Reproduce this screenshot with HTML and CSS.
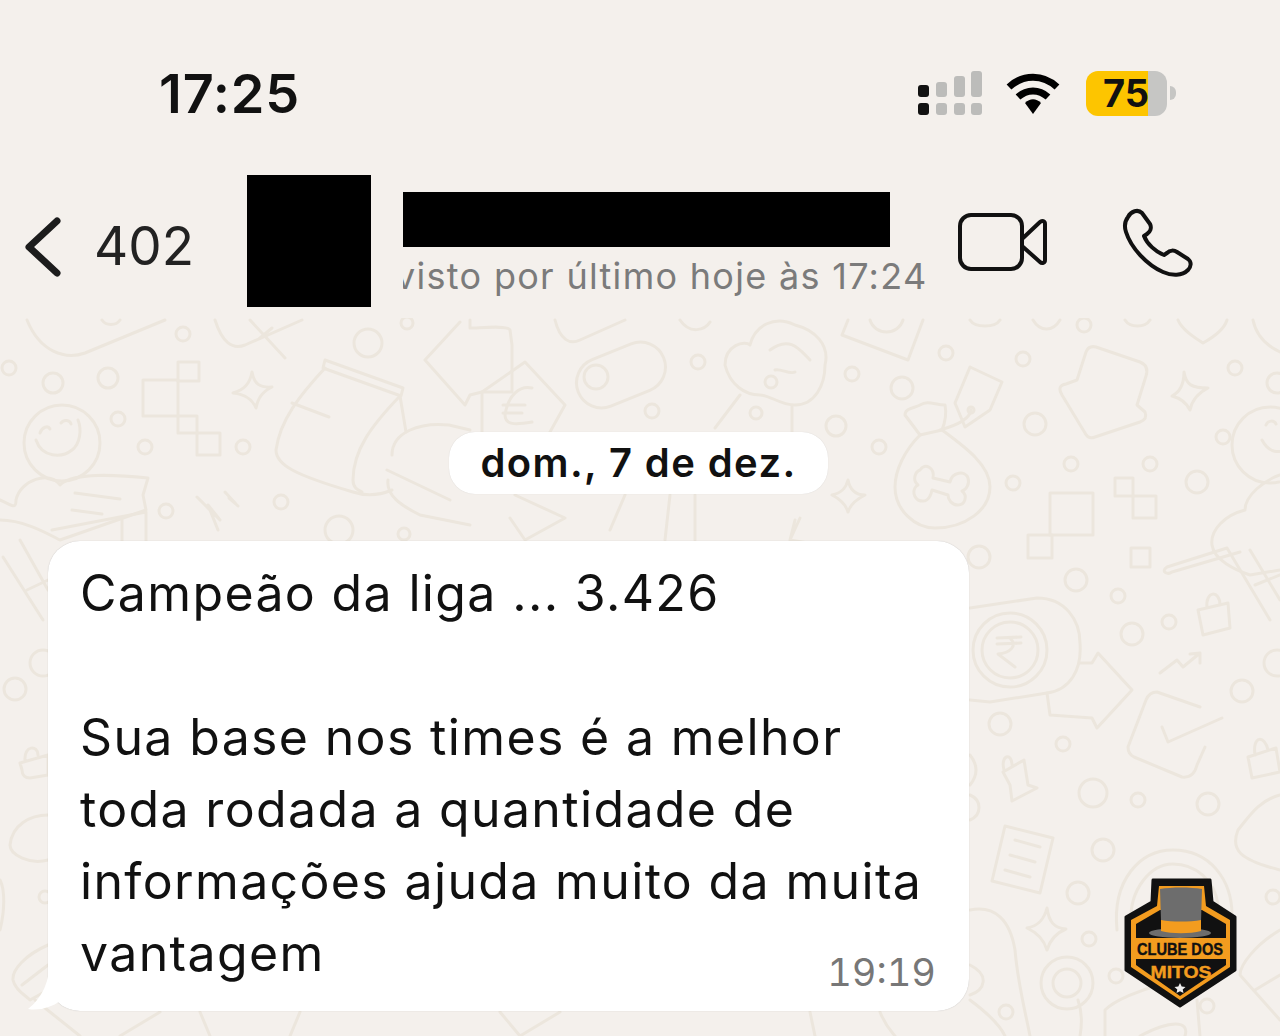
FILE: index.html
```html
<!DOCTYPE html>
<html lang="pt-BR">

<head>
    <meta charset="UTF-8">
    <title>Conversa</title>
    <link rel="stylesheet" href="styles.css">
</head>

<body>
    <div class="screen">
        <div class="status-bar">
            <div class="clock">17:25</div>
            <div class="status-icons">
                <svg class="signal" viewBox="918 71 64 45">
                    <rect x="918" y="85" width="11" height="12" rx="3" fill="#111" />
                    <rect x="918" y="103" width="11" height="12" rx="3" fill="#111" />
                    <g fill="#bcbcba">
                        <rect x="936" y="82" width="11" height="15" rx="3" />
                        <rect x="954" y="76" width="11" height="21" rx="3" />
                        <rect x="971" y="71" width="11" height="26" rx="3" />
                        <rect x="936" y="103" width="11" height="12" rx="3" />
                        <rect x="954" y="103" width="11" height="12" rx="3" />
                        <rect x="971" y="103" width="11" height="12" rx="3" />
                    </g>
                </svg>
                <svg class="wifi" viewBox="1005 70 56 46" fill="none" stroke="#000" stroke-width="7">
                    <path d="M1009 87 C1023 74 1043 74 1057 87" />
                    <path d="M1018 97 C1027 89 1039 89 1048 97" />
                    <path d="M1025 103 C1030 98 1036 98 1041 103 L1033 114 Z" fill="#000" stroke="none" />
                </svg>
                <div class="battery">
                    <div class="battery-body">75</div>
                    <div class="battery-nub"></div>
                </div>
            </div>
        </div>

        <div class="chat-header">
            <svg class="back-icon" viewBox="0 0 38 62" fill="none" stroke="#1c1c1c" stroke-width="7" stroke-linecap="round" stroke-linejoin="round">
                <path d="M33 5 L5 31 L33 57" />
            </svg>
            <div class="back-count">402</div>
            <div class="avatar"></div>
            <div class="contact">
                <div class="contact-name"></div>
                <div class="contact-seen">visto por último hoje às 17:24</div>
            </div>
            <svg class="video-icon" viewBox="958 212 90 60" fill="none" stroke="#111" stroke-width="4" stroke-linejoin="round">
                <rect x="960" y="215" width="62" height="54" rx="11" />
                <path d="M1022 239 L1040 222 C1042 220 1045 221 1045 224 L1045 260 C1045 263 1042 264 1040 262 L1022 246" />
            </svg>
            <svg class="phone-icon" viewBox="1122 207 72 72" fill="none" stroke="#111" stroke-width="4" stroke-linejoin="round">
                <path d="M1128 217 C1131 211 1138 209 1142 213 L1150 224 C1152 228 1150 232 1147 234 L1144 236 C1147 244 1156 252 1164 255 L1167 253 C1170 250 1174 250 1177 252 L1188 259 C1192 262 1191 267 1188 270 C1182 276 1172 276 1163 272 C1147 265 1131 248 1126 232 C1124 226 1125 221 1128 217 Z" />
            </svg>
        </div>

        <div class="chat">
            <!-- desenho de fundo do whatsapp -->
            <svg class="wallpaper" viewBox="0 318 1280 718" fill="none" stroke="#ece6dd" stroke-width="3" stroke-linejoin="round" stroke-linecap="round">
                <g>
                    <circle cx="9" cy="368" r="7" /><circle cx="53" cy="383" r="10" /><circle cx="108" cy="378" r="10" />
                    <circle cx="183" cy="334" r="7" /><circle cx="368" cy="343" r="14" /><circle cx="407" cy="323" r="6" />
                    <circle cx="118" cy="419" r="7" /><circle cx="145" cy="447" r="7" /><circle cx="243" cy="447" r="7" />
                    <circle cx="166" cy="511" r="7" /><circle cx="281" cy="502" r="7" /><circle cx="339" cy="530" r="14" />
                    <circle cx="404" cy="534" r="6" /><circle cx="946" cy="353" r="7" /><circle cx="852" cy="374" r="7" />
                    <circle cx="902" cy="388" r="11" /><circle cx="836" cy="426" r="10" /><circle cx="879" cy="447" r="7" />
                    <circle cx="1023" cy="359" r="7" /><circle cx="1084" cy="325" r="7" /><circle cx="1035" cy="424" r="11" />
                    <circle cx="1235" cy="368" r="7" /><circle cx="1223" cy="437" r="7" /><circle cx="1071" cy="464" r="7" />
                    <circle cx="1150" cy="464" r="7" /><circle cx="1013" cy="483" r="7" /><circle cx="1197" cy="482" r="11" />
                    <circle cx="1277" cy="383" r="10" /><circle cx="698" cy="362" r="7" /><circle cx="652" cy="411" r="7" />
                    <circle cx="756" cy="413" r="6" /><circle cx="979" cy="557" r="11" /><circle cx="1076" cy="580" r="11" />
                    <circle cx="1118" cy="596" r="7" /><circle cx="1132" cy="634" r="11" /><circle cx="1169" cy="622" r="7" />
                    <circle cx="1242" cy="691" r="11" /><circle cx="1000" cy="724" r="11" /><circle cx="1063" cy="744" r="7" />
                    <circle cx="1277" cy="663" r="13" /><circle cx="1093" cy="793" r="14" /><circle cx="1138" cy="800" r="7" />
                    <circle cx="1208" cy="804" r="11" /><circle cx="1103" cy="850" r="11" /><circle cx="1078" cy="893" r="11" />
                    <circle cx="1089" cy="939" r="7" /><circle cx="1006" cy="1012" r="7" /><circle cx="1273" cy="897" r="7" />
                    <circle cx="1116" cy="976" r="7" /><circle cx="1207" cy="1006" r="7" /><circle cx="15" cy="689" r="11" />
                    <circle cx="43" cy="663" r="13" /><circle cx="45" cy="897" r="6" />
                </g>
                <g>
                    <path d="M27 320 C40 352 65 360 85 353 L165 320" />
                    <path d="M102 320 C106 326 116 326 120 320" />
                    <path d="M215 320 C222 342 232 350 245 345 L302 320" />
                    <path d="M250 320 L285 358 M260 338 L272 328" />
                    <rect x="143" y="380" width="35" height="36" />
                    <rect x="178" y="362" width="21" height="19" />
                    <rect x="178" y="416" width="19" height="17" />
                    <rect x="197" y="433" width="23" height="22" />
                    <path d="M252 372 C254 384 260 388 272 387 C262 392 258 398 256 408 C252 398 244 394 233 393 C244 390 250 384 252 372 Z" />
                    <path d="M325 360 L403 388 L401 396 L323 368 Z" />
                    <path d="M325 368 C300 395 280 420 276 450 C276 465 295 475 353 492 C368 497 380 495 392 490" />
                    <path d="M400 396 C372 425 353 450 353 480 C353 488 358 490 362 492 M400 396 L406 432 M292 403 L329 417" />
                    <path d="M392 455 C392 432 420 422 449 425 L470 430" />
                    <path d="M387 470 L450 500 M388 480 C386 495 400 505 420 515 L470 525" />
                    <circle cx="62" cy="443" r="38" />
                    <path d="M36 440 C42 458 62 458 72 450 C80 444 82 430 78 420" />
                    <path d="M40 433 C42 427 48 425 50 429 M61 423 C64 419 70 420 71 424" />
                    <path d="M0 500 C12 505 16 510 16 500 C20 480 50 470 60 485 C72 472 120 475 148 478 L143 495 L146 510 L60 540 C50 535 25 520 0 520" />
                    <path d="M75 493 L120 499 M72 510 L102 514 M52 530 L146 512 L146 541 M122 520 L122 541" />
                    <path d="M197 497 L220 520 L208 505 L218 530 M225 492 L236 504 L229 498 L238 506" />
                    <path d="M470 320 L470 328 C480 328 508 325 510 330 L512 345 L512 392 L482 392 L470 395 L465 405 L425 360 L460 322" />
                    <path d="M482 392 L482 432 M482 392 L525 362 L565 405 L550 432" />
                    <path d="M532 388 C520 385 508 395 505 415 C505 425 515 425 532 422 M503 405 L525 405 M503 413 L522 413" />
                    <rect x="575" y="350" width="92" height="50" rx="25" transform="rotate(-22 621 375)" />
                    <circle cx="596" cy="377" r="12" />
                    <path d="M555 320 C560 340 570 345 580 340 L625 320 M680 320 C690 335 705 330 710 322" />
                    <path d="M725 365 C725 345 745 340 750 345 C755 325 775 315 795 325 C815 330 830 345 825 365 C825 385 815 405 795 405 C780 405 770 395 760 395 C745 395 730 385 725 365 Z" />
                    <path d="M770 350 C790 335 800 350 810 360 M775 370 C780 368 790 375 795 372" />
                    <circle cx="771" cy="382" r="6" />
                    <path d="M740 395 L715 428 M792 405 L792 432" />
                    <path d="M848 320 L842 335 L908 360 L923 320 M870 320 C875 336 898 336 903 320" />
                    <path d="M970 320 C975 328 995 328 1000 320 M1033 320 C1040 332 1053 332 1060 320 M1125 320 C1130 328 1145 328 1150 320" />
                    <path d="M1178 320 C1182 330 1195 338 1203 343 C1212 338 1224 330 1227 320 M1253 320 C1256 335 1265 345 1280 352" />
                    <path d="M1077 380 L1086 352 C1088 347 1092 346 1096 347 L1140 362 C1147 365 1148 370 1146 376 L1137 405 L1145 412 C1147 417 1145 420 1140 422 L1095 437 C1090 439 1087 437 1085 433 L1062 395 C1058 388 1060 385 1066 384 Z" />
                    <path d="M970 367 L1002 382 L990 410 L965 427 L955 403 Z" />
                    <circle cx="971" cy="410" r="3" />
                    <path d="M971 410 C970 418 958 425 940 430" />
                    <path d="M920 435 L905 415 C905 408 915 408 920 405 C928 400 935 405 945 405 C947 415 944 425 942 430 Z" />
                    <path d="M920 435 C905 450 895 470 895 487 C895 510 915 528 935 528 C965 528 990 510 990 487 C990 465 965 447 942 430" />
                    <path d="M920 470 C925 462 935 468 933 478 L950 482 C952 472 965 470 968 478 C970 484 966 490 962 491 C968 496 965 505 958 505 C952 505 948 500 948 495 L932 490 C930 500 925 503 918 500 C912 495 913 488 918 485 C912 480 915 472 920 470 Z" />
                    <path d="M848 480 C850 490 855 495 865 495 C855 500 850 505 848 512 C846 505 842 500 832 495 C842 493 846 488 848 480 Z" />
                    <path d="M1184 372 C1186 385 1192 388 1208 388 C1198 393 1192 400 1190 410 C1186 402 1180 398 1172 396 C1180 392 1184 385 1184 372 Z" />
                    <circle cx="1270" cy="445" r="38" />
                    <path d="M1262 440 C1270 455 1280 452 1290 450 M1266 425 C1268 420 1274 420 1276 424" />
                    <path d="M1280 475 C1265 480 1245 495 1245 510 C1225 515 1210 530 1212 545 C1214 560 1235 570 1250 575 L1280 570" />
                    <rect x="1050" y="493" width="43" height="42" />
                    <rect x="1028" y="535" width="24" height="23" />
                    <rect x="1115" y="478" width="18" height="18" />
                    <rect x="1133" y="496" width="23" height="22" />
                    <rect x="1131" y="548" width="19" height="19" />
                    <path d="M1167 567 L1227 548 M1167 567 C1160 572 1168 575 1172 572 L1240 552 M1227 548 L1270 620 M1250 550 L1280 600 M1255 585 L1280 575" />
                    <path d="M970 608 L1037 598 C1065 598 1080 620 1080 643 C1082 670 1070 690 1047 693 L990 702 L970 700" />
                    <circle cx="1010" cy="650" r="37" /><circle cx="1010" cy="650" r="28" />
                    <path d="M997 638 L1021 637 M997 644 L1021 643 M1010 638 C1018 646 1010 653 998 654 L1015 667" />
                    <path d="M1047 693 L1050 715 L1092 718 L1097 728 L1132 690 L1098 653 L1092 663 L1080 663" />
                    <path d="M1160 673 L1177 660 L1183 667 L1200 653 M1190 654 L1200 653 L1200 663" />
                    <path d="M1200 707 L1157 692 C1152 692 1148 695 1146 700 L1128 747 C1128 752 1130 755 1134 757 L1182 777 C1190 778 1195 773 1197 765 L1205 747" />
                    <path d="M1162 727 L1168 742 L1222 718" />
                    <path d="M1198 610 L1228 603 L1230 628 L1203 635 Z M1207 608 C1205 590 1220 590 1220 605" />
                    <path d="M1248 757 L1276 748 L1280 772 L1252 778 Z M1255 755 C1252 735 1265 735 1268 750" />
                    <path d="M20 763 L48 755 L48 775 L30 778 C25 778 22 775 22 770 Z M25 760 C24 745 38 745 38 755" />
                    <path d="M1005 826 L1053 838 L1040 893 L992 881 Z M1015 840 L1040 847 M1010 855 L1035 862 M1005 870 L1030 877" />
                    <path d="M1047 908 C1049 922 1054 928 1066 929 C1056 933 1050 940 1047 950 C1044 940 1038 933 1027 928 C1038 926 1044 920 1047 908 Z" />
                    <path d="M1003 772 L1024 760 L1028 785 L1037 788 L1012 801 L1010 785 Z M1004 770 C1000 755 1012 752 1012 765" />
                    <path d="M970 755 C978 765 978 775 970 785 M970 795 C982 800 982 815 970 820" />
                    <path d="M1117 930 C1112 880 1140 850 1173 850 C1210 850 1232 880 1232 915" />
                    <path d="M1131 920 C1130 890 1150 864 1173 864 C1195 864 1215 880 1218 905" />
                    <circle cx="1067" cy="983" r="26" /><circle cx="1067" cy="983" r="14" />
                    <path d="M1078 1000 C1082 1012 1082 1025 1080 1036 M970 910 C995 905 1010 920 1015 950 C1018 985 1025 1010 1030 1036" />
                    <path d="M970 965 C990 975 985 990 970 995 M970 1000 C990 1015 1000 1025 1005 1036" />
                    <path d="M1280 795 C1260 800 1250 815 1238 830 C1230 850 1240 860 1280 870" />
                    <path d="M1280 930 C1255 945 1240 965 1240 975 L1280 1020 M1255 990 L1280 975" />
                    <path d="M1105 1036 L1105 1010 C1115 1000 1140 990 1160 985 M1185 1036 C1190 1020 1170 1020 1140 1036 M1197 1000 L1200 1036" />
                    <path d="M3 557 L43 620 M20 540 L48 590 M27 590 L48 580" />
                    <path d="M48 815 C30 815 12 825 10 845 C10 855 30 865 48 860" />
                    <path d="M48 945 C25 955 12 970 13 980 C15 990 25 995 30 1000 L48 990 M22 985 L48 965 M35 1000 L80 1036" />
                    <path d="M0 930 C5 910 5 890 0 880" />
                    <path d="M120 1036 L160 1012 M200 1012 L210 1036 M300 1012 L290 1036 M500 1012 L520 1036 L560 1012 M810 1012 L815 1036 M880 1012 C885 1025 890 1030 895 1036" />
                    <path d="M515 495 L565 518 L525 540 L510 518 M610 530 L625 495 M670 495 L665 540 M695 495 L695 540 M795 520 L790 540 L850 550 M790 540 L800 518" />
                </g>
            </svg>

            <div class="date-pill">dom., 7 de dez.</div>

            <div class="bubble">
                <svg class="bubble-tail" viewBox="0 0 60 54">
                    <path d="M22 0 C22 24 14 40 0 51 C12 53 24 49 32 43 C38 49 47 52 60 52 L60 0 Z" fill="#fff" />
                </svg>
                <p class="msg-line">Campeão da liga ... 3.426</p>
                <p class="msg-line msg-gap">Sua base nos times é a melhor</p>
                <p class="msg-line">toda rodada a quantidade de</p>
                <p class="msg-line">informações ajuda muito da muita</p>
                <div class="msg-last">
                    <p class="msg-line">vantagem</p>
                    <span class="msg-time">19:19</span>
                </div>
            </div>

            <svg class="logo" viewBox="0 0 160 160">
                <path d="M53 20 L110 20 L112 42 L135 57 L135 110 L80 146 L26 110 L26 57 L52 42 Z" fill="#111" stroke="#111" stroke-width="3" stroke-linejoin="round" />
                <path d="M59 26 L104 26 L106 46 L130 60 L130 107 L80 140 L31 107 L31 60 L57 46 Z" fill="#f39c1f" />
                <path d="M36 64 L60 50 L102 50 L126 64 L126 78 L36 78 Z" fill="#111" />
                <path d="M36 99 L126 99 L126 105 L80 136 L36 105 Z" fill="#111" />
                <ellipse cx="80" cy="73" rx="31" ry="5" fill="#6d6d6d" />
                <path d="M60 29 C72 27 90 27 102 29 L101 61 C90 64 72 64 61 61 Z" fill="#6d6d6d" />
                <path d="M61 60 C72 62 90 62 101 60 L101 71 C90 74 72 74 61 71 Z" fill="#f39c1f" />
                <text class="logo-top" x="80" y="95" textLength="86" lengthAdjust="spacingAndGlyphs">CLUBE DOS</text>
                <text class="logo-bottom" x="81" y="118" textLength="61" lengthAdjust="spacingAndGlyphs">MITOS</text>
                <path d="M80 123 L81.7 126.6 L85.5 127 L82.7 129.5 L83.5 133 L80 131.2 L76.5 133 L77.3 129.5 L74.5 127 L78.3 126.6 Z" fill="#eee" />
            </svg>
        </div>
    </div>
</body>

</html>
```

FILE: styles.css
```css
* {
    box-sizing: border-box;
}

body {
    margin: 0;
    background-color: #f4f0ec;
    font-family: Inter, "Liberation Sans", sans-serif;
    color: #111;
}

p {
    margin: 0;
}

.screen {
    width: 1280px;
    height: 1036px;
    overflow: hidden;
    display: flex;
    flex-direction: column;
}

/* barra de status */
.status-bar {
    height: 175px;
    flex-shrink: 0;
    display: flex;
    justify-content: space-between;
    align-items: flex-start;
    padding: 62px 104px 0 159px;
}

.clock {
    font-size: 54px;
    font-weight: 600;
    line-height: 64px;
    letter-spacing: 0.8px;
}

.status-icons {
    display: flex;
    align-items: center;
    margin-top: 8px;
}

.signal {
    width: 64px;
    height: 45px;
}

.wifi {
    width: 56px;
    height: 46px;
    margin-left: 23px;
}

.battery {
    display: flex;
    align-items: center;
    margin-left: 25px;
}

.battery-body {
    width: 81px;
    height: 45px;
    border-radius: 12px;
    padding-left: 17px;
    background: linear-gradient(90deg, #fdc500 76%, #c6c6c4 76%);
    font-size: 38px;
    font-weight: 700;
    line-height: 45px;
}

.battery-nub {
    width: 6px;
    height: 14px;
    margin-left: 3px;
    border-radius: 0 6px 6px 0;
    background-color: #c6c6c4;
}

/* cabecalho da conversa */
.chat-header {
    height: 143px;
    flex-shrink: 0;
    display: flex;
    align-items: flex-start;
    padding-left: 24px;
}

.back-icon {
    width: 38px;
    height: 62px;
    margin-top: 41px;
}

.back-count {
    width: 153px;
    margin-left: 32px;
    margin-top: 39px;
    font-size: 53px;
    line-height: 64px;
    color: #222;
}

.avatar {
    width: 124px;
    height: 132px;
    background-color: #000;
}

.contact {
    width: 526px;
    margin-left: 32px;
    margin-top: 17px;
    overflow: hidden;
}

.contact-name {
    width: 487px;
    height: 55px;
    background-color: #000;
}

.contact-seen {
    margin-top: 4px;
    margin-left: -8px;
    font-size: 36px;
    line-height: 50px;
    letter-spacing: 1.3px;
    color: #7b7b7b;
    white-space: nowrap;
}

.video-icon {
    width: 90px;
    height: 60px;
    margin-top: 37px;
    margin-left: 29px;
}

.phone-icon {
    width: 72px;
    height: 72px;
    margin-top: 32px;
    margin-left: 74px;
}

/* area de mensagens */
.chat {
    position: relative;
    flex: 1;
    display: flex;
    flex-direction: column;
    padding: 114px 0 0 48px;
}

.wallpaper {
    position: absolute;
    left: 0;
    top: 0;
    width: 1280px;
    height: 718px;
}

.date-pill {
    position: relative;
    align-self: flex-start;
    margin-left: 401px;
    width: 379px;
    height: 62px;
    border-radius: 26px;
    background-color: #fff;
    box-shadow: 0 0 1px rgba(0, 0, 0, 0.15);
    font-size: 40px;
    font-weight: 600;
    line-height: 62px;
    letter-spacing: 1.4px;
    text-align: center;
    color: #111;
}

.bubble {
    position: relative;
    width: 921px;
    height: 470px;
    margin-top: 47px;
    padding: 16px 33px 0 32px;
    border-radius: 32px;
    background-color: #fff;
    box-shadow: 0 0 1px rgba(0, 0, 0, 0.25);
}

.bubble-tail {
    position: absolute;
    left: -20px;
    bottom: -1px;
    width: 60px;
    height: 54px;
}

.msg-line {
    position: relative;
    font-size: 50px;
    line-height: 72px;
    letter-spacing: 1.35px;
    color: #111;
}

.msg-gap {
    margin-top: 72px;
}

.msg-last {
    display: flex;
    justify-content: space-between;
    align-items: flex-end;
}

.msg-time {
    margin-bottom: -8px;
    font-size: 38px;
    line-height: 50px;
    font-variant-numeric: tabular-nums;
    color: #777;
}

.logo {
    position: absolute;
    left: 1100px;
    top: 542px;
    width: 160px;
    height: 160px;
}

.logo-top,
.logo-bottom {
    font-family: "Liberation Sans", sans-serif;
    font-weight: 700;
    text-anchor: middle;
    stroke-width: 0.4px;
}

.logo-top {
    font-size: 16px;
    fill: #111;
    stroke: #111;
}

.logo-bottom {
    font-size: 17px;
    fill: #f39c1f;
    stroke: #f39c1f;
}
```
